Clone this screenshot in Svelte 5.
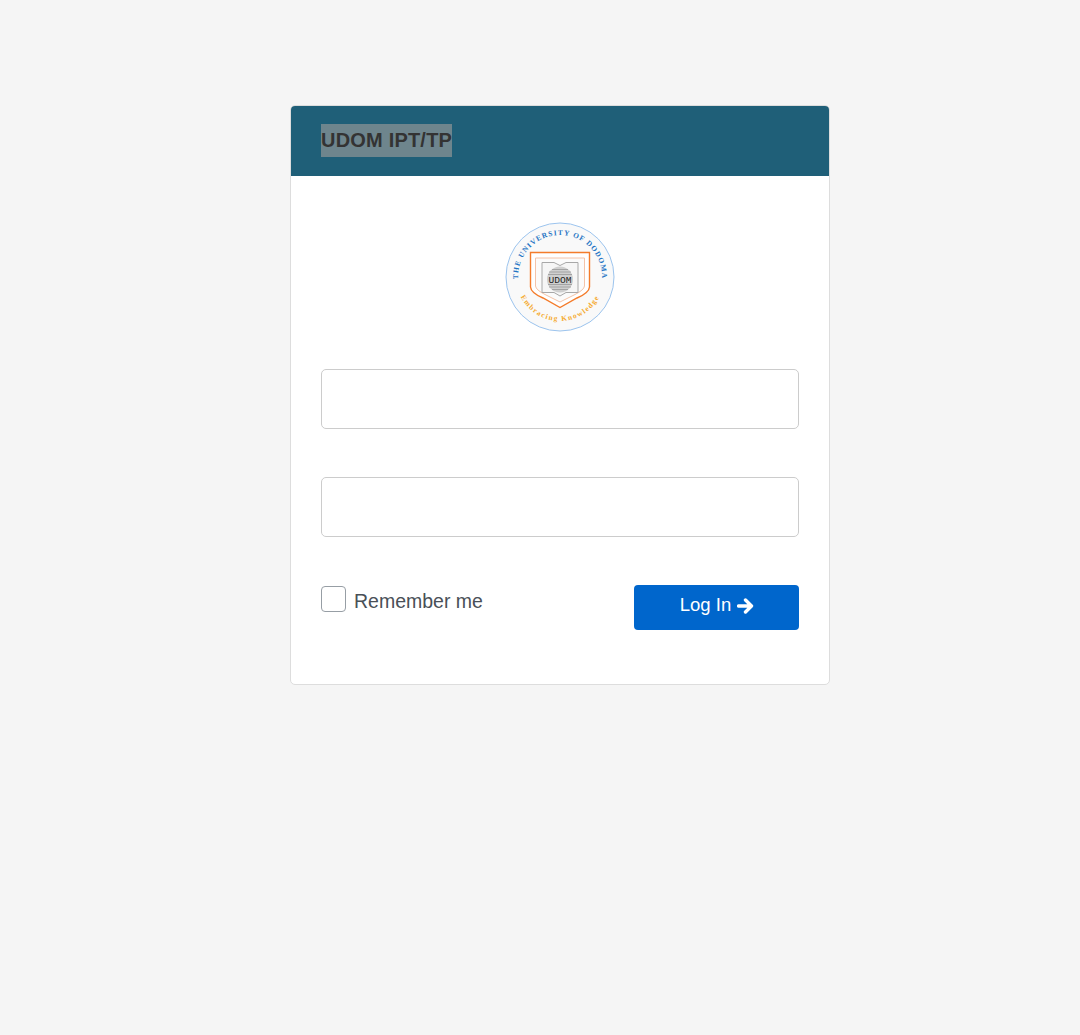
<script>
    let username = "";
    let password = "";
    let remember = false;
</script>

<div class="page">
    <div class="card">
        <div class="card-header">
            <span class="title">UDOM IPT/TP</span>
        </div>
        <form class="card-body" on:submit|preventDefault>
            <div class="logo">
                <svg width="110" height="110" viewBox="0 0 110 110" aria-label="The University of Dodoma">
                    <defs>
                        <path id="arc-top" d="M 55 97 A 42 42 0 1 1 55 13 A 42 42 0 1 1 55 97" />
                        <path id="arc-bottom" d="M 55 11 A 44 44 0 1 0 55 99 A 44 44 0 1 0 55 11" />
                    </defs>
                    <circle cx="55" cy="55" r="54" fill="#f9f9f9" stroke="#9cc4ee" stroke-width="1" />
                    <text class="arc-top"><textPath href="#arc-top" startOffset="50%" text-anchor="middle">THE UNIVERSITY OF DODOMA</textPath></text>
                    <text class="arc-bottom"><textPath href="#arc-bottom" startOffset="50%" text-anchor="middle">Embracing Knowledge</textPath></text>
                    <path d="M 25.500 30.500 H 84.500 V 65 Q 84 71 72 76 L 55 85.500 L 38 76 Q 26 71 25.500 65 Z" fill="#fff" stroke="#f47b2a" stroke-width="1.400" />
                    <path d="M 30.500 36 H 79.500 V 64 Q 79 68 70 72.500 L 55 80 L 40 72.500 Q 31 68 30.500 64 Z" fill="#fbfbfb" stroke="#f4c3a8" stroke-width="1" />
                    <path d="M 37 40.500 H 49 L 55 43.500 L 61 40.500 H 73 V 70.500 H 61 L 55 74 L 49 70.500 H 37 Z" fill="#f6f6f6" stroke="#a8a8a8" stroke-width="1" />
                    <circle cx="55" cy="57.500" r="13" fill="#cfcfcf" />
                    <g stroke="#8f8f8f" stroke-width="0.700">
                        <path d="M 47 47.500 H 63 M 44 50 H 66 M 43 52.500 H 67 M 43 62.500 H 67 M 44 65 H 66 M 47 67.500 H 63" />
                    </g>
                    <text class="crest" x="55" y="60.500" text-anchor="middle">UDOM</text>
                </svg>
            </div>
            <input class="field" type="text" bind:value={username} />
            <input class="field second" type="password" bind:value={password} />
            <div class="actions">
                <label class="remember">
                    <input type="checkbox" bind:checked={remember} />
                    <span>Remember me</span>
                </label>
                <button type="submit">
                    Log In
                    <svg class="arrow" width="17" height="16" viewBox="0 0 17 16">
                        <path d="M 1.600 8 H 13.500 M 8.500 2 L 14.500 8 L 8.500 14" fill="none" stroke="#fff" stroke-width="3.400" stroke-linecap="round" stroke-linejoin="round" />
                    </svg>
                </button>
            </div>
        </form>
    </div>
</div>

<style>
:global(body) {
    background: #f5f5f5;
    font-family: "Liberation Sans", Arial, sans-serif;
}
.page {
    min-height: 1035px;
    box-sizing: border-box;
    padding: 105px 0 0 40px;
    display: flex;
    justify-content: center;
}
.card {
    width: 540px;
    height: 580px;
    box-sizing: border-box;
    background: #fff;
    border: 1px solid #dddddd;
    border-radius: 5px;
    overflow: hidden;
}
.card-header {
    height: 70px;
    box-sizing: border-box;
    background: #1f5f78;
    padding: 18px 30px 0;
}
.title {
    display: block;
    width: fit-content;
    height: 33px;
    line-height: 32px;
    font-size: 20px;
    font-weight: bold;
    letter-spacing: 0.200px;
    color: #333;
    background: #6e858d;
}
.card-body {
    padding: 46px 30px 0;
}
.logo {
    height: 110px;
    display: flex;
    justify-content: center;
    margin-bottom: 37px;
}
.arc-top {
    font: bold 7.400px "Liberation Serif", serif;
    letter-spacing: 1px;
    fill: #1f74c4;
}
.arc-bottom {
    font: bold 7.400px "Liberation Serif", serif;
    letter-spacing: 1.300px;
    fill: #f5ab30;
}
.crest {
    font: 9.600px "Liberation Mono", monospace;
    fill: #222;
}
.field {
    display: block;
    width: 100%;
    height: 60px;
    box-sizing: border-box;
    border: 1px solid #cccccc;
    border-radius: 5px;
    background: #fff;
    padding: 6px 12px;
    font-size: 18px;
}
.second {
    margin-top: 48px;
}
.actions {
    margin-top: 48px;
    display: flex;
    justify-content: space-between;
    align-items: flex-start;
}
.remember {
    display: flex;
    align-items: flex-start;
    gap: 8px;
    padding-top: 1px;
    margin-top: -1px;
    font-size: 19.500px;
    color: #495057;
}
.remember span {
    padding-top: 5px;
}
.remember input {
    appearance: none;
    width: 25px;
    height: 26px;
    margin: 1px 0 0;
    background: #fff;
    border: 1px solid #979ea5;
    border-radius: 4px;
}
button {
    width: 165px;
    height: 45px;
    border: none;
    border-radius: 4px;
    background: #0066cc;
    color: #fff;
    font-family: inherit;
    font-size: 18.500px;
    padding: 0 0 5px 1px;
    display: flex;
    align-items: center;
    justify-content: center;
    gap: 6px;
}
.arrow {
    margin-top: 1px;
}
</style>
